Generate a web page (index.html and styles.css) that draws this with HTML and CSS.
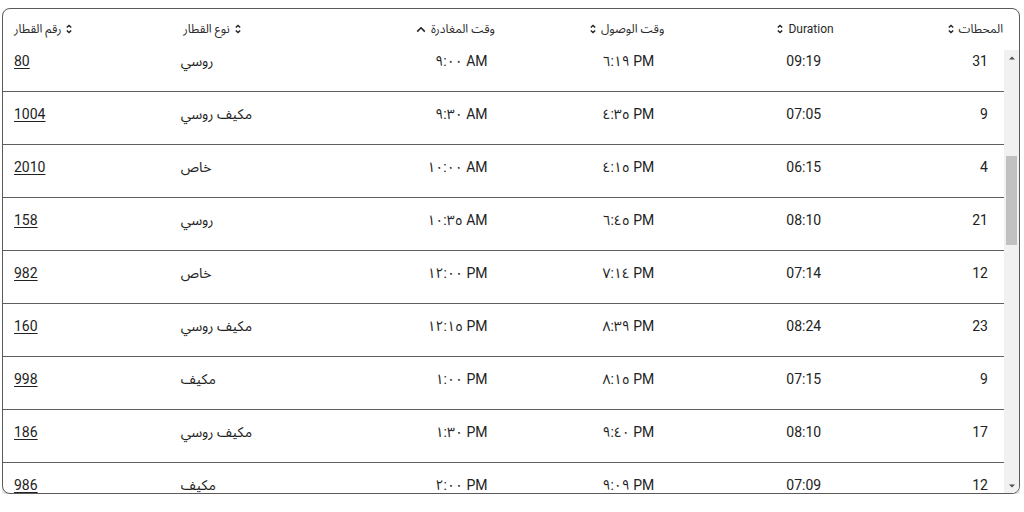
FILE: index.html
```html
<!DOCTYPE html>
<html lang="ar">
<head>
<meta charset="utf-8">
<title>مواعيد القطارات</title>
<link rel="stylesheet" href="styles.css">
</head>
<body>
<div class="card">
  <div class="head row">
    <div class="cell l"><span class="hd">رقم القطار</span><svg class="si" viewBox="0 0 6 10"><path d="M0.8 3.6 3 1.4 5.2 3.6M0.8 6.4 3 8.6 5.2 6.4"/></svg></div>
    <div class="cell l"><span class="hd">نوع القطار</span><svg class="si" viewBox="0 0 6 10"><path d="M0.8 3.6 3 1.4 5.2 3.6M0.8 6.4 3 8.6 5.2 6.4"/></svg></div>
    <div class="cell r"><svg class="su" viewBox="0 0 10 7"><path d="M1.2 5.6 5 1.8 8.8 5.6"/></svg><span class="hd">وقت المغادرة</span></div>
    <div class="cell r"><svg class="si" viewBox="0 0 6 10"><path d="M0.8 3.6 3 1.4 5.2 3.6M0.8 6.4 3 8.6 5.2 6.4"/></svg><span class="hd">وقت الوصول</span></div>
    <div class="cell r"><svg class="si" viewBox="0 0 6 10"><path d="M0.8 3.6 3 1.4 5.2 3.6M0.8 6.4 3 8.6 5.2 6.4"/></svg><span class="hd">Duration</span></div>
    <div class="cell r"><svg class="si" viewBox="0 0 6 10"><path d="M0.8 3.6 3 1.4 5.2 3.6M0.8 6.4 3 8.6 5.2 6.4"/></svg><span class="hd">المحطات</span></div>
  </div>
  <div class="body">
    <div class="rows">
      <div class="rows-inner">
        <div class="row"><div class="cell l"><a href="#">80</a></div><div class="cell l">روسي</div><div class="cell r">٩:٠٠ AM</div><div class="cell r">٦:١٩ PM</div><div class="cell r">09:19</div><div class="cell r">31</div></div>
        <div class="row"><div class="cell l"><a href="#">1004</a></div><div class="cell l">مكيف روسي</div><div class="cell r">٩:٣٠ AM</div><div class="cell r">٤:٣٥ PM</div><div class="cell r">07:05</div><div class="cell r">9</div></div>
        <div class="row"><div class="cell l"><a href="#">2010</a></div><div class="cell l">خاص</div><div class="cell r">١٠:٠٠ AM</div><div class="cell r">٤:١٥ PM</div><div class="cell r">06:15</div><div class="cell r">4</div></div>
        <div class="row"><div class="cell l"><a href="#">158</a></div><div class="cell l">روسي</div><div class="cell r">١٠:٣٥ AM</div><div class="cell r">٦:٤٥ PM</div><div class="cell r">08:10</div><div class="cell r">21</div></div>
        <div class="row"><div class="cell l"><a href="#">982</a></div><div class="cell l">خاص</div><div class="cell r">١٢:٠٠ PM</div><div class="cell r">٧:١٤ PM</div><div class="cell r">07:14</div><div class="cell r">12</div></div>
        <div class="row"><div class="cell l"><a href="#">160</a></div><div class="cell l">مكيف روسي</div><div class="cell r">١٢:١٥ PM</div><div class="cell r">٨:٣٩ PM</div><div class="cell r">08:24</div><div class="cell r">23</div></div>
        <div class="row"><div class="cell l"><a href="#">998</a></div><div class="cell l">مكيف</div><div class="cell r">١:٠٠ PM</div><div class="cell r">٨:١٥ PM</div><div class="cell r">07:15</div><div class="cell r">9</div></div>
        <div class="row"><div class="cell l"><a href="#">186</a></div><div class="cell l">مكيف روسي</div><div class="cell r">١:٣٠ PM</div><div class="cell r">٩:٤٠ PM</div><div class="cell r">08:10</div><div class="cell r">17</div></div>
        <div class="row"><div class="cell l"><a href="#">986</a></div><div class="cell l">مكيف</div><div class="cell r">٢:٠٠ PM</div><div class="cell r">٩:٠٩ PM</div><div class="cell r">07:09</div><div class="cell r">12</div></div>
      </div>
    </div>
    <div class="sb">
      <div class="sb-btn"><svg class="tri" viewBox="0 0 6 4"><path d="M0 3.5 3 0.5 6 3.5Z"/></svg></div>
      <div class="sb-track"><div class="sb-thumb"></div></div>
      <div class="sb-btn"><svg class="tri" viewBox="0 0 6 4"><path d="M0 0.5 3 3.5 6 0.5Z"/></svg></div>
    </div>
  </div>
</div>
</body>
</html>
```

FILE: styles.css
```css
html, body {
  background: #ffffff;
}
body {
  margin: 8px 4px 0 2px;
  font-family: Roboto, "Noto Sans Arabic", "DejaVu Sans", sans-serif;
  color: #222222;
}
.card {
  height: 486px;
  box-sizing: border-box;
  border: 1px solid #5a5a5a;
  border-radius: 8px;
  overflow: hidden;
  display: flex;
  flex-direction: column;
  box-shadow: 0 2px 4px rgba(0, 0, 0, 0.22);
  background: #fff;
}
.row {
  display: grid;
  grid-template-columns: repeat(6, 1fr);
}
.head {
  height: 38px;
  flex: none;
  font-size: 12px;
  color: #2a2a2a;
}
.head .cell {
  gap: 5px;
  padding-top: 2px;
  padding-bottom: 0;
}
.body {
  flex: 1;
  min-height: 0;
  display: flex;
}
.rows {
  flex: 1;
  min-width: 0;
  overflow: hidden;
}
.rows-inner {
  margin-top: -8px;
}
.rows .row {
  height: 52px;
  border-bottom: 1px solid #5f5f5f;
  font-size: 14px;
}
.cell {
  display: flex;
  align-items: center;
  padding: 0 16px 8px 11px;
  min-width: 0;
  white-space: nowrap;
}
.cell.l { justify-content: flex-start; }
.cell.r { justify-content: flex-end; }
.cell a {
  color: #222222;
  text-decoration: underline;
  text-underline-offset: 2px;
}
.si {
  width: 6px;
  height: 10px;
  flex: none;
  fill: none;
  stroke: #222;
  stroke-width: 1.4;
}
.su {
  width: 10px;
  height: 7px;
  flex: none;
  fill: none;
  stroke: #222;
  stroke-width: 1.6;
}
.sb {
  width: 15px;
  flex: none;
  margin-top: 3px;
  background: #f1f1f1;
  display: flex;
  flex-direction: column;
}
.sb-btn {
  height: 15px;
  flex: none;
  display: flex;
  align-items: center;
  justify-content: center;
}
.tri {
  width: 6px;
  height: 4px;
  fill: #505050;
}
.sb-track {
  flex: 1;
}
.sb-thumb {
  margin: 91px 2px 0;
  height: 89px;
  background: #c1c1c1;
}
```
